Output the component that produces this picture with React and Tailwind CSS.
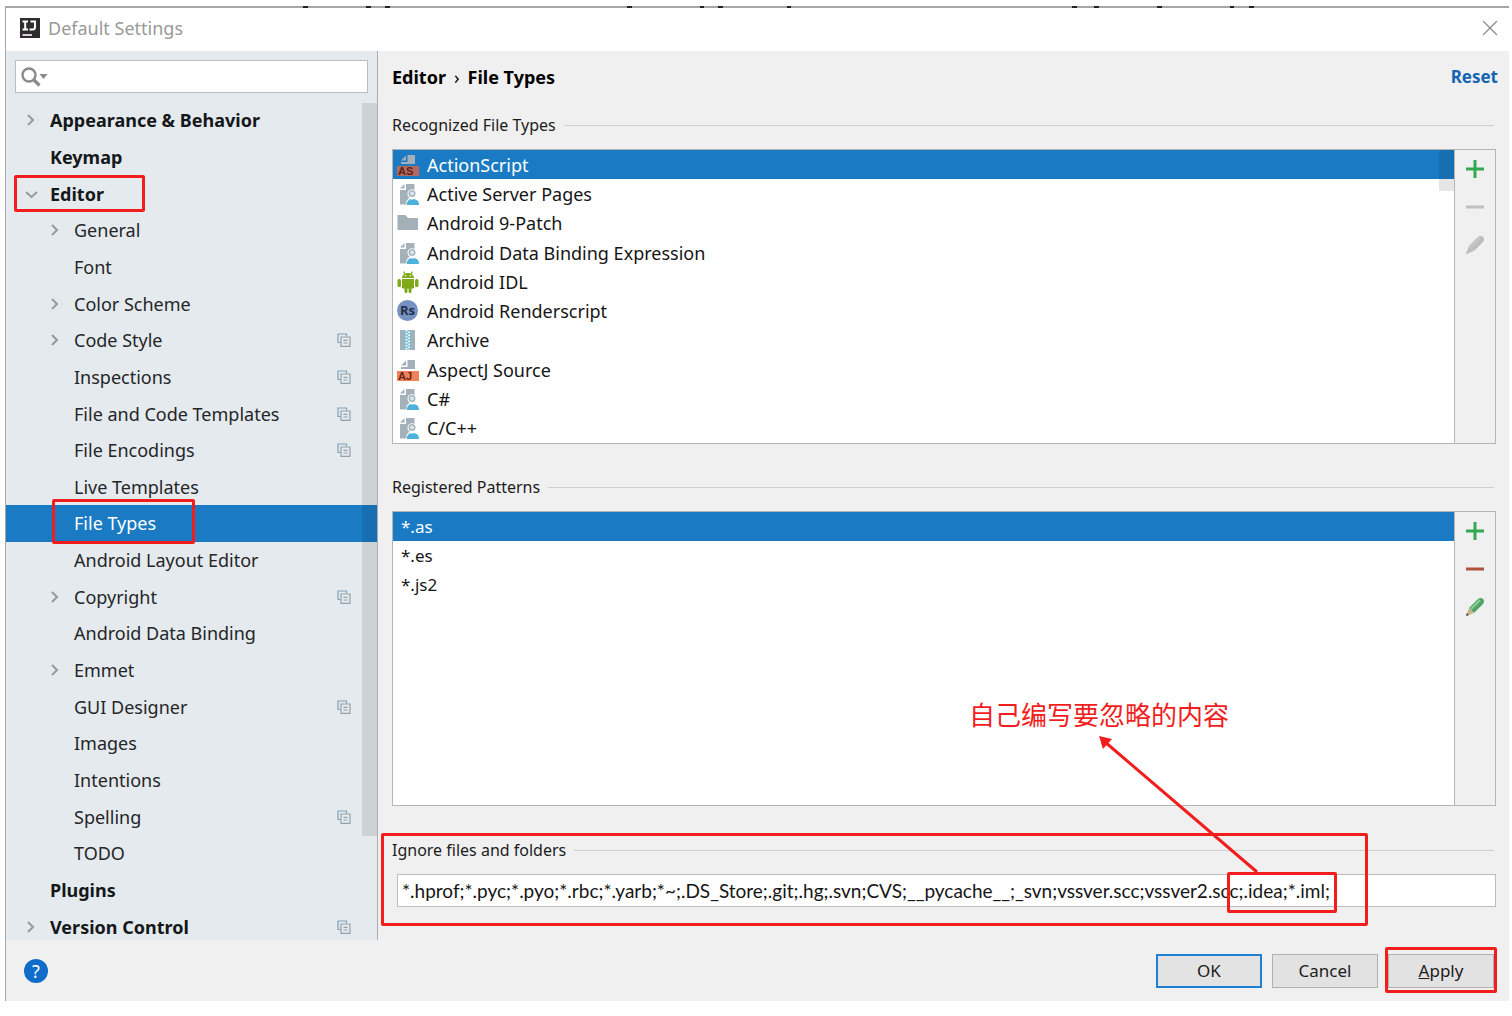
import { X } from 'lucide-react'

const TREE = [
  { label: 'Appearance & Behavior', level: 0, arrow: 'right' },
  { label: 'Keymap', level: 0 },
  { label: 'Editor', level: 0, arrow: 'down', marked: true },
  { label: 'General', level: 1, arrow: 'right' },
  { label: 'Font', level: 1 },
  { label: 'Color Scheme', level: 1, arrow: 'right' },
  { label: 'Code Style', level: 1, arrow: 'right', project: true },
  { label: 'Inspections', level: 1, project: true },
  { label: 'File and Code Templates', level: 1, project: true },
  { label: 'File Encodings', level: 1, project: true },
  { label: 'Live Templates', level: 1 },
  { label: 'File Types', level: 1, selected: true, marked: true },
  { label: 'Android Layout Editor', level: 1 },
  { label: 'Copyright', level: 1, arrow: 'right', project: true },
  { label: 'Android Data Binding', level: 1 },
  { label: 'Emmet', level: 1, arrow: 'right' },
  { label: 'GUI Designer', level: 1, project: true },
  { label: 'Images', level: 1 },
  { label: 'Intentions', level: 1 },
  { label: 'Spelling', level: 1, project: true },
  { label: 'TODO', level: 1 },
  { label: 'Plugins', level: 0 },
  { label: 'Version Control', level: 0, arrow: 'right', project: true },
]

const FILE_TYPES = [
  { label: 'ActionScript', icon: 'as' },
  { label: 'Active Server Pages', icon: 'user' },
  { label: 'Android 9-Patch', icon: 'folder' },
  { label: 'Android Data Binding Expression', icon: 'user' },
  { label: 'Android IDL', icon: 'android' },
  { label: 'Android Renderscript', icon: 'rs' },
  { label: 'Archive', icon: 'archive' },
  { label: 'AspectJ Source', icon: 'aj' },
  { label: 'C#', icon: 'user' },
  { label: 'C/C++', icon: 'user' },
]

const PATTERNS = ['*.as', '*.es', '*.js2']

const IGNORED =
  '*.hprof;*.pyc;*.pyo;*.rbc;*.yarb;*~;.DS_Store;.git;.hg;.svn;CVS;__pycache__;_svn;vssver.scc;vssver2.scc;.idea;*.iml;'

function LanguageIcon({ text, fill, color }) {
  return (
    <svg width="22" height="22" viewBox="0 0 22 22" aria-hidden="true">
      <path d="M4 6.500 9 1.500V6.500ZM10.500 1H18v9H4V8h6.500Z" fill="#a3b0b9" />
      <rect y="12" width="22" height="10" fill={fill} />
      <text x="1" y="21" fontSize="11" fontWeight="700" fontFamily="Liberation Sans, sans-serif" fill={color}>
        {text}
      </text>
    </svg>
  )
}

function FileIcon({ type }) {
  if (type === 'as') return <LanguageIcon text="AS" fill="#b5695c" color="#5c1f22" />
  if (type === 'aj') return <LanguageIcon text="AJ" fill="#f08259" color="#6b2417" />

  if (type === 'folder') {
    return (
      <svg width="22" height="22" viewBox="0 0 22 22" aria-hidden="true">
        <path d="M0.500 3H8.500L11 6H21V18H0.500Z" fill="#a4b0b8" />
      </svg>
    )
  }

  if (type === 'android') {
    return (
      <svg width="22" height="22" viewBox="0 0 22 22" aria-hidden="true">
        <g fill="#7fa81a">
          <path d="M5 7a6 5 0 0 1 12 0Z" />
          <path d="M6.500 0.500 8.500 4M15.500 0.500 13.500 4" stroke="#7fa81a" strokeWidth="1.200" />
          <path d="M5 8h12v8.500a1 1 0 0 1-1 1h-1.500V20.500a1.500 1.500 0 0 1-3 0V17.500h-1V20.500a1.500 1.500 0 0 1-3 0V17.500H6a1 1 0 0 1-1-1Z" />
          <rect x="0.500" y="8" width="3.500" height="8" rx="1.500" />
          <rect x="18" y="8" width="3.500" height="8" rx="1.500" />
        </g>
        <circle cx="8.500" cy="4.800" r="0.800" fill="#fff" />
        <circle cx="13.500" cy="4.800" r="0.800" fill="#fff" />
      </svg>
    )
  }

  if (type === 'rs') {
    return (
      <svg width="22" height="22" viewBox="0 0 22 22" aria-hidden="true">
        <circle cx="10.500" cy="10.500" r="10.500" fill="#7691c2" />
        <text x="3" y="15" fontSize="13" fontWeight="700" fontFamily="Open Sans, sans-serif" fill="#232f4d">
          Rs
        </text>
      </svg>
    )
  }

  if (type === 'archive') {
    return (
      <svg width="22" height="22" viewBox="0 0 22 22" aria-hidden="true">
        <path d="M3 1h15v20H3Z" fill="#9fb3bd" />
        <path d="M8 1h5v20H8Z" fill="#7fc4dc" />
        <path d="M9.500 1v20" stroke="#e4f6fb" strokeWidth="2" strokeDasharray="1.500 1.500" />
        <path d="M12 2.500v18.500" stroke="#e4f6fb" strokeWidth="2" strokeDasharray="1.500 1.500" />
      </svg>
    )
  }

  return (
    <svg width="22" height="22" viewBox="0 0 22 22" aria-hidden="true">
      <path d="M3 5.500 7.500 1V5.500ZM9 1h8.500v6a4.500 4.500 0 0 0-5 7.500L9.500 18v3.500H3V7h6Z" fill="#a5b1b9" />
      <circle cx="15" cy="10.500" r="2.700" fill="#dfe8ec" stroke="#a5b6c0" strokeWidth="1.600" />
      <path d="M10 22a6 6 0 0 1 3.500-6q1.500 1.200 3.500 0a6 6 0 0 1 5 6Z" fill="#4db2da" />
    </svg>
  )
}

function TreeArrow({ direction }) {
  return (
    <svg width="14" height="14" viewBox="0 0 14 14" fill="none" stroke="#949a9e" strokeWidth="2" aria-hidden="true">
      {direction === 'right' && <path d="M4 2 9 7 4 12" />}
      {direction === 'down' && <path d="M2 5 7.500 10 13 5" />}
    </svg>
  )
}

function ProjectIcon() {
  return (
    <svg width="14" height="14" viewBox="0 0 14 14" fill="none" strokeWidth="1.200" aria-hidden="true">
      <path d="M3.500 9.500H1V1H9.500V3.500" stroke="#7fa0b5" />
      <path d="M4 4h9v9.400H4Z" stroke="#93a1aa" />
      <path d="M6.500 7.300h4M6.500 10h4" stroke="#93a1aa" />
    </svg>
  )
}

function TreeRow({ item }) {
  return (
    <li className={`relative flex items-center ${item.selected ? 'bg-[#1a7bc4] text-white' : 'text-[#242628]'}`}>
      <button
        type="button"
        className={`flex h-full w-full items-center gap-3 text-left whitespace-nowrap ${
          item.level === 0 ? 'pl-[18px] font-bold text-[#15181a]' : 'pl-[42px]'
        }`}
      >
        <TreeArrow direction={item.arrow} />
        {item.label}
      </button>
      {item.project && (
        <span className="absolute right-[26px]">
          <ProjectIcon />
        </span>
      )}
      {item.marked && (
        <span
          className={`pointer-events-none absolute z-10 rounded-xs border-3 border-[#f21d1d] ${
            item.level === 0 ? 'inset-y-0 left-2 w-[131px]' : '-top-[6px] -bottom-[2px] left-[46px] w-[143px]'
          }`}
        />
      )}
    </li>
  )
}

function GroupTitle({ children, htmlFor }) {
  const Tag = htmlFor ? 'label' : 'h2'
  return (
    <div className="flex h-6 items-center gap-2 pr-[2px]">
      <Tag htmlFor={htmlFor} className="text-base text-[#1c1c1c]">
        {children}
      </Tag>
      <span className="h-px flex-1 bg-[#cfcfcf]" />
    </div>
  )
}

function Toolbar({ disabled }) {
  return (
    <div className="flex w-[41px] shrink-0 flex-col items-center border-l border-[#b5b5b5] bg-[#f0f0f0] pt-2">
      <button type="button" aria-label="Add" className="flex h-[38px] items-start pt-px">
        <svg width="20" height="20" viewBox="0 0 20 20" strokeWidth="3">
          <path d="M1 10h18M10 1v18" stroke="#35a853" />
        </svg>
      </button>
      <button type="button" aria-label="Remove" disabled={disabled} className="flex h-[38px] items-start pt-px">
        <svg width="20" height="20" viewBox="0 0 20 20" strokeWidth="3">
          <path d="M1 10h18" stroke={disabled ? '#c0c0c0' : '#b0523f'} />
        </svg>
      </button>
      <button type="button" aria-label="Edit" disabled={disabled} className="flex h-[38px] items-start pt-px">
        <svg width="20" height="20" viewBox="0 0 20 20">
          <path d="M4 11 13 2q3-2 5 0t0 5L9 16Z" fill={disabled ? '#bdbdbd' : '#50a565'} />
          <path d="M6 12 15 3" stroke={disabled ? '#c8c8c8' : '#8fd09a'} strokeWidth="2" />
          <path d="M4 11 9 16 1 19Z" fill={disabled ? '#bdbdbd' : '#c9b58c'} />
          <path d="M1 19 2 16 4 18Z" fill={disabled ? '#bdbdbd' : '#4a4235'} />
        </svg>
      </button>
    </div>
  )
}

function Sidebar() {
  return (
    <aside className="relative flex w-[372px] shrink-0 flex-col overflow-hidden border-r border-[#a9adb0] bg-[#e5eaee]">
      <div className="mx-[9px] mt-[9px] flex h-[33px] shrink-0 items-center border border-[#b9bec2] bg-white pl-[5px]">
        <svg width="28" height="20" viewBox="0 0 28 20" fill="none" stroke="#8a8a8a" aria-hidden="true">
          <circle cx="8" cy="8" r="6.500" strokeWidth="2.400" />
          <path d="M12.500 12.500 18.500 18.500" strokeWidth="3.200" />
          <path d="M18.500 7h8L22.500 12Z" fill="#8a8a8a" stroke="none" />
        </svg>
        <input type="text" aria-label="Search settings" className="h-full min-w-0 flex-1 px-1 outline-none" />
      </div>
      <ul className="mt-[9px] grid h-[843px] shrink-0 auto-rows-fr text-lg">
        {TREE.map((item) => (
          <TreeRow key={item.label} item={item} />
        ))}
      </ul>
      <span className="absolute top-[52px] right-0 h-[733px] w-[15px] bg-black/10" />
    </aside>
  )
}

function FileTypesPanel() {
  return (
    <main className="relative flex min-w-0 flex-1 flex-col pr-[13px] pl-[14px]">
      <div className="mt-3 flex h-7 items-center justify-between text-lg font-bold">
        <h1 className="flex gap-2 text-black">
          Editor <span className="font-normal">›</span> File Types
        </h1>
        <a href="#reset" className="-mr-[2px] text-[17px] text-[#1464b4]">
          Reset
        </a>
      </div>

      <div className="mt-[22px]">
        <GroupTitle>Recognized File Types</GroupTitle>
      </div>
      <div className="mt-3 flex h-[295px] border border-[#b5b5b5] bg-white">
        <div className="relative flex-1">
          <ul className="grid h-full auto-rows-fr text-lg text-[#161616]">
            {FILE_TYPES.map((type, index) => (
              <li
                key={type.label}
                className={`flex items-center gap-2 pl-1 ${index === 0 ? 'bg-[#1a7bc4] text-white' : ''}`}
              >
                <FileIcon type={type.icon} />
                {type.label}
              </li>
            ))}
          </ul>
          <span className="absolute top-0 right-0 h-[41px] w-[15px] bg-black/10" />
        </div>
        <Toolbar disabled />
      </div>

      <div className="mt-[31px]">
        <GroupTitle>Registered Patterns</GroupTitle>
      </div>
      <div className="mt-3 flex h-[295px] border border-[#b5b5b5] bg-white">
        <ul className="grid flex-1 grid-rows-10 text-[17px] text-[#161616]">
          {PATTERNS.map((pattern, index) => (
            <li
              key={pattern}
              className={`flex items-center pl-2 ${index === 0 ? 'bg-[#1a7bc4] text-white' : ''}`}
            >
              {pattern}
            </li>
          ))}
        </ul>
        <Toolbar />
      </div>

      <div className="relative mt-8">
        <GroupTitle htmlFor="ignored">Ignore files and folders</GroupTitle>
        <input
          id="ignored"
          type="text"
          defaultValue={IGNORED}
          className="mt-3 ml-[5px] block h-[33px] w-[calc(100%-5px)] border border-[#bdbdbd] bg-white px-1 font-[Lato,sans-serif] text-[19px] text-[#161616] outline-none"
        />
        <span className="pointer-events-none absolute -top-[5px] -left-[11px] h-[93px] w-[987px] rounded-xs border-3 border-[#f21d1d]" />
        <span className="pointer-events-none absolute top-[34px] left-[835px] h-[41px] w-[110px] rounded-xs border-3 border-[#f21d1d]" />
        <div className="pointer-events-none absolute -top-[141px] left-[577px] text-[#f21d1d]">
          <p className="text-[26px] leading-9 whitespace-nowrap">自己编写要忽略的内容</p>
          <svg width="170" height="144" viewBox="0 0 170 144" className="ml-[128px]" aria-hidden="true">
            <path d="M8 9 160 139" stroke="#f21d1d" strokeWidth="3" />
            <path d="M2 3 15 6 6 16Z" fill="#f21d1d" />
          </svg>
        </div>
      </div>
    </main>
  )
}

function App() {
  return (
    <div className="relative bg-white pt-[6px] pr-[3px] pl-[5px] font-['Noto_Sans','Noto_Sans_CJK_SC',sans-serif]">
      {/* tails of the text line hidden behind the window */}
      <svg className="absolute top-[6px] left-0" width="1300" height="2" viewBox="0 0 1300 2" aria-hidden="true">
        <path
          d="M303 1h5M366 1h5M385 1h5M627 1h5M700 1h4M718 1h5M787 1h4M1072 1h5M1094 1h5M1157 1h5M1230 1h4M1249 1h5"
          stroke="#222"
          strokeWidth="2"
        />
      </svg>
      <div className="border-t-2 border-l border-[#a6a6a6] bg-[#f0f0f0]">
        <header className="flex h-[43px] items-center gap-2 bg-white pr-[10px] pb-[3px] pl-[14px]">
          <svg width="20" height="20" viewBox="0 0 20 20" aria-hidden="true">
            <rect width="20" height="20" fill="#2f2b2e" />
            <g fill="none" stroke="#fff">
              <path d="M2.500 3.500H8M5.200 3.500V11.500M2.500 11.500H8" strokeWidth="2" />
              <path d="M10.500 3.500H15V9q0 2.500-2.500 2.500H9.500" strokeWidth="2" />
              <path d="M2.500 17h9.500" strokeWidth="1.600" />
            </g>
          </svg>
          <span className="flex-1 text-lg text-[#999]">Default Settings</span>
          <button type="button" aria-label="Close" className="text-[#8a8a8a]">
            <X size={26} strokeWidth={1.2} className="-mr-[4px]" />
          </button>
        </header>

        <div className="flex h-[889px]">
          <Sidebar />
          <FileTypesPanel />
        </div>

        <footer className="flex h-[61px] items-center gap-[10px] pr-[15px] pl-[18px] text-[17px] text-[#1c1c1c]">
          <button
            type="button"
            aria-label="Help"
            className="mr-auto flex size-6 items-center justify-center rounded-full bg-[#0f6cc9] text-lg text-white"
          >
            ?
          </button>
          <button type="button" className="h-[34px] w-[106px] border-2 border-[#1f7fd0] bg-[#e3e3e3]">
            OK
          </button>
          <button type="button" className="h-[34px] w-[106px] border border-[#b0b0b0] bg-[#e2e2e2]">
            Cancel
          </button>
          <div className="relative">
            <button type="button" className="h-[34px] w-[106px] border border-[#b0b0b0] bg-[#e2e2e2]">
              <u>A</u>pply
            </button>
            <span className="pointer-events-none absolute -inset-x-[3px] -top-[7px] -bottom-[5px] rounded-xs border-3 border-[#f21d1d]" />
          </div>
        </footer>
      </div>
    </div>
  )
}

export default App
